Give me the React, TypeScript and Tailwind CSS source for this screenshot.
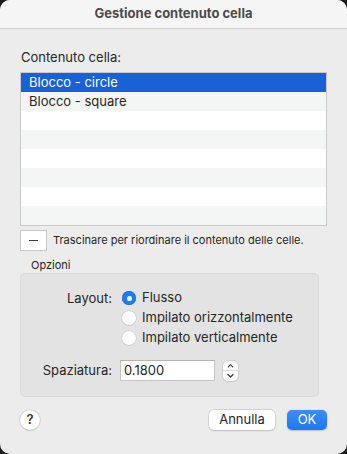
// Finestra di dialogo "Gestione contenuto cella" in stile macOS

const font = "font-['Inter','Liberation_Sans',Arial,sans-serif]";

const rows = ["Blocco - circle", "Blocco - square", "", "", "", "", "", ""];

function Radio({ checked, label }: { checked?: boolean; label: string }) {
  return (
    <div className="flex h-[20px] items-center gap-[6px]">
      {checked ? (
        <span className="flex h-[14px] w-[14px] items-center justify-center rounded-full bg-[#1f7cf3] shadow-[inset_0_0_0_0.5px_#1766d0]">
          <span className="h-[5px] w-[5px] rounded-full bg-white"></span>
        </span>
      ) : (
        <span className="h-[14px] w-[14px] rounded-full bg-white shadow-[0_0_0_0.5px_#c4c4c4,0_0.5px_1px_rgba(0,0,0,0.15)]"></span>
      )}
      <span className="text-[13px] text-[#262626]">{label}</span>
    </div>
  );
}

export default function App() {
  return (
    <div className={`h-[454px] w-[347px] bg-[#1c1c1c] ${font}`}>
      <div className="flex h-full flex-col overflow-hidden rounded-[10px] bg-[#ececec]">
        {/* Title bar */}
        <div className="flex h-[29px] shrink-0 items-center justify-center border-b border-[#d3d3d3] bg-[#f6f5f5]">
          <span className="text-[13px] font-bold text-[#4b4b4b]">Gestione contenuto cella</span>
        </div>

        <div className="flex flex-col px-[20px] pt-[20px]">
          <div className="h-[16px] pl-[1px] text-[13px] leading-[16px] text-[#262626]">Contenuto cella:</div>

          {/* List */}
          <div className="mt-[7px] border border-[#c9c9c9] bg-white">
            {rows.map((r, i) => (
              <div
                key={i}
                className={
                  i === 0
                    ? "flex h-[19px] items-center bg-[#1a61d7] pl-[8px] text-[13px] text-white"
                    : i % 2 === 1
                      ? "flex h-[19px] items-center bg-[#f4f5f5] pl-[8px] text-[13px] text-[#262626]"
                      : "flex h-[19px] items-center bg-white pl-[8px] text-[13px] text-[#262626]"
                }
              >
                {r}
              </div>
            ))}
          </div>

          {/* Minus button + hint */}
          <div className="mt-[4px] flex items-center gap-[6px]">
            <div className="flex h-[21px] w-[27px] items-center justify-center border border-[#c9c9c9] bg-white">
              <span className="h-[1px] w-[9px] bg-[#3a3a3a]"></span>
            </div>
            <span className="text-[11px] text-[#262626]">Trascinare per riordinare il contenuto delle celle.</span>
          </div>

          <div className="mt-[7px] h-[14px] pl-[11px] text-[11px] leading-[14px] text-[#262626]">Opzioni</div>

          {/* Options group */}
          <div className="mt-[1px] mr-[8px] flex h-[124px] flex-col rounded-[5px] border border-[#dadada] bg-[#e3e3e3] pt-[14px]">
            <div className="flex">
              <div className="w-[92px] pr-[1px] text-right text-[13px] leading-[20px] text-[#262626]">Layout:</div>
              <div className="ml-[9px] flex flex-col">
                <Radio checked label="Flusso" />
                <Radio label="Impilato orizzontalmente" />
                <Radio label="Impilato verticalmente" />
              </div>
            </div>
            <div className="mt-[12px] flex items-center">
              <div className="w-[92px] pr-[1px] text-right text-[13px] text-[#262626]">Spaziatura:</div>
              <div className="ml-[7px] flex h-[21px] w-[95px] items-center border border-[#c4c4c4] border-t-[#b5b5b5] bg-white pl-[3px] text-[13px] text-[#262626]">
                0.1800
              </div>
              <div className="ml-[8px] flex h-[20px] w-[15px] flex-col items-center rounded-[5px] bg-white shadow-[0_0_0_0.5px_#c4c4c4,0_0.5px_1.5px_rgba(0,0,0,0.2)]">
                <svg width="15" height="10" viewBox="0 0 15 10" className="border-b border-[#e0e0e0]">
                  <path d="M5 6.5 L7.5 4 L10 6.5" fill="none" stroke="#3a3a3a" strokeWidth="1.3" strokeLinecap="round" strokeLinejoin="round" />
                </svg>
                <svg width="15" height="10" viewBox="0 0 15 10">
                  <path d="M5 3.5 L7.5 6 L10 3.5" fill="none" stroke="#3a3a3a" strokeWidth="1.3" strokeLinecap="round" strokeLinejoin="round" />
                </svg>
              </div>
            </div>
          </div>

          {/* Bottom buttons */}
          <div className="mt-[13px] flex items-center">
            <div className="flex h-[20px] w-[20px] items-center justify-center rounded-full bg-white text-[13px] font-semibold text-[#333] shadow-[0_0_0_0.5px_#c4c4c4,0_0.5px_1.5px_rgba(0,0,0,0.2)]">
              ?
            </div>
            <div className="ml-auto flex h-[20px] w-[66px] items-center justify-center rounded-[5px] bg-white text-[13px] text-[#262626] shadow-[0_0_0_0.5px_#c4c4c4,0_0.5px_1.5px_rgba(0,0,0,0.2)]">
              Annulla
            </div>
            <div className="ml-[12px] flex h-[20px] w-[40px] items-center justify-center rounded-[5px] bg-gradient-to-b from-[#3a8ff8] to-[#1c78f2] text-[13px] text-white shadow-[0_0.5px_1.5px_rgba(0,0,0,0.2)]">
              OK
            </div>
          </div>
        </div>
      </div>
    </div>
  );
}
